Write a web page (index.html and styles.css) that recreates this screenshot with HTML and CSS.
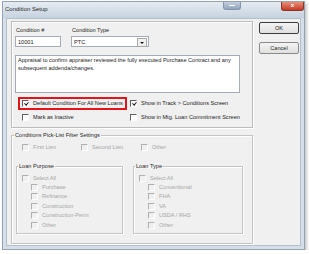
FILE: index.html
```html
<!DOCTYPE html>
<html lang="en">
<head>
  <meta charset="UTF-8">
  <meta name="viewport" content="width=device-width, initial-scale=1.0">
  <title>Condition Setup</title>
  <link rel="stylesheet" href="styles.css">
</head>
<body>
  <div class="window">
    <div class="titlebar">
      <span class="title">Condition Setup</span>
      <span class="tb-min"></span>
      <span class="tb-close">x</span>
    </div>

    <div class="client">
      <div class="main">
        <div class="frame">
          <div class="fields">
            <div class="field">
              <label class="lbl">Condition #</label>
              <div class="input num">10001</div>
            </div>
            <div class="field">
              <label class="lbl">Condition Type</label>
              <div class="input select">PTC<span class="drop"></span></div>
            </div>
          </div>

          <div class="memo">Appraisal to confirm appraiser reviewed the fully executed Purchase Contract and any subsequent addenda/changes.</div>

          <div class="opts">
            <div class="opt highlight"><span class="cb on"></span>Default Condition For All New Loans</div>
            <div class="opt"><span class="cb on"></span>Show in Track &gt; Conditions Screen</div>
            <div class="opt indent"><span class="cb"></span>Mark as Inactive</div>
            <div class="opt"><span class="cb"></span>Show in Mtg. Loan Commitment Screen</div>
          </div>
        </div>

        <fieldset class="group">
          <legend>Conditions Pick-List Filter Settings</legend>
          <div class="liens">
            <div class="opt off"><span class="cb"></span>First Lien</div>
            <div class="opt off"><span class="cb"></span>Second Lien</div>
            <div class="opt off"><span class="cb"></span>Other</div>
          </div>

          <div class="subgroups">
            <fieldset class="sub purpose">
              <legend>Loan Purpose</legend>
              <div class="list">
                <div class="opt off"><span class="cb"></span>Select All</div>
                <div class="opt off child"><span class="cb"></span>Purchase</div>
                <div class="opt off child"><span class="cb"></span>Refinance</div>
                <div class="opt off child"><span class="cb"></span>Construction</div>
                <div class="opt off child"><span class="cb"></span>Construction-Perm</div>
                <div class="opt off child"><span class="cb"></span>Other</div>
              </div>
            </fieldset>
            <fieldset class="sub type">
              <legend>Loan Type</legend>
              <div class="list">
                <div class="opt off"><span class="cb"></span>Select All</div>
                <div class="opt off child"><span class="cb"></span>Conventional</div>
                <div class="opt off child"><span class="cb"></span>FHA</div>
                <div class="opt off child"><span class="cb"></span>VA</div>
                <div class="opt off child"><span class="cb"></span>USDA / RHS</div>
                <div class="opt off child"><span class="cb"></span>Other</div>
              </div>
            </fieldset>
          </div>
        </fieldset>
      </div>

      <div class="side">
        <button class="btn default">OK</button>
        <button class="btn">Cancel</button>
      </div>
    </div>
  </div>
</body>
</html>
```

FILE: styles.css
```css
html, body {
  margin: 0;
  padding: 0;
  background: #ffffff;
}
body {
  font-family: "Liberation Sans", Arial, sans-serif;
  font-size: 5.6px;
  line-height: 7px;
  color: #1c1c1c;
}

/* window chrome */
.window {
  margin: 1px 0 0 2px;
  width: 303px;
  height: 249px;
  box-sizing: border-box;
  border: 1px solid #95a2b1;
  background: #d6dfe9;
  box-shadow: 2px 2px 3px rgba(0, 0, 0, 0.22);
  display: flex;
  flex-direction: column;
}
.titlebar {
  height: 16px;
  display: flex;
  align-items: flex-start;
  background: linear-gradient(#e6ecf2, #c6d2df);
}
.title {
  padding: 4px 0 0 2px;
  font-size: 6px;
  color: #1f1f1f;
}
.tb-min {
  margin: 0 0 0 auto;
  width: 16px;
  height: 7px;
  border: 1px solid #8595a8;
  border-top: none;
  border-radius: 0 0 3px 3px;
  background: linear-gradient(#c3cfdd, #93a7c0);
  position: relative;
}
.tb-min::after {
  content: "";
  position: absolute;
  left: 5px;
  top: 3px;
  width: 6px;
  height: 1px;
  background: #ffffff;
}
.tb-close {
  margin: 0 0 0 40px;
  width: 21px;
  height: 8px;
  border: 1px solid #86362a;
  border-top: none;
  border-radius: 0 0 3px 3px;
  background: linear-gradient(#e8907f, #c53b25);
  color: #ffffff;
  font-size: 6px;
  line-height: 7px;
  text-align: center;
  font-weight: bold;
}
.client {
  flex: 1;
  margin: 0 3px 3px 3px;
  background: #f0f0f0;
  border: 1px solid #b4bfcc;
  display: flex;
  padding: 2px 0 0 4px;
}

/* main area */
.main {
  width: 242px;
  display: flex;
  flex-direction: column;
}
.frame {
  height: 107px;
  box-sizing: border-box;
  border: 1px solid #bcbcbc;
  box-shadow: inset 1px 1px 0 #ffffff, 1px 1px 0 #ffffff;
  padding: 5px 0 0 3px;
}
.fields {
  display: flex;
  gap: 10px;
}
.field {
  display: flex;
  flex-direction: column;
  gap: 2px;
}
.lbl {
  padding-left: 1px;
}
.input {
  height: 11px;
  box-sizing: border-box;
  border: 1px solid #a5acb5;
  background: #ffffff;
  padding: 1px 2px;
  line-height: 8px;
}
.num {
  width: 46px;
}
.select {
  width: 78px;
  display: flex;
  justify-content: space-between;
  padding-right: 1px;
}
.drop {
  width: 8px;
  height: 7px;
  border: 1px solid #a8a8a8;
  background: #f0f0f0;
  position: relative;
}
.drop::after {
  content: "";
  position: absolute;
  left: 2px;
  top: 3px;
  border-left: 2px solid transparent;
  border-right: 2px solid transparent;
  border-top: 2px solid #111111;
}
.memo {
  margin-top: 8px;
  width: 225px;
  height: 38px;
  box-sizing: border-box;
  border: 1px solid #a5acb5;
  background: #ffffff;
  padding: 1px 2px;
  line-height: 7.5px;
}
.opts {
  margin: 4px 0 0 3px;
  display: grid;
  grid-template-columns: 112px auto;
  row-gap: 1px;
  align-items: center;
}
.opts .opt {
  height: 13px;
}
.opt {
  display: flex;
  align-items: center;
  gap: 4px;
  white-space: nowrap;
}
.highlight {
  justify-self: start;
  border: 2px solid #e3141b;
  padding: 0 2px;
  height: 13px;
  box-sizing: border-box;
}
.indent {
  padding-left: 4px;
}

/* checkboxes */
.cb {
  flex: none;
  width: 7px;
  height: 7px;
  box-sizing: border-box;
  border-top: 1px solid #5e5e5e;
  border-left: 1px solid #5e5e5e;
  border-right: 1px solid #ffffff;
  border-bottom: 1px solid #ffffff;
  background: #ffffff;
  position: relative;
}
.cb.on::after {
  content: "";
  position: absolute;
  left: 1.5px;
  top: 0;
  width: 1.5px;
  height: 3px;
  border-right: 1.2px solid #1a1a1a;
  border-bottom: 1.2px solid #1a1a1a;
  transform: rotate(40deg);
}
.off {
  color: #a6a6a6;
}
.off .cb {
  border-top-color: #b0b0b0;
  border-left-color: #b0b0b0;
  background: #f0f0f0;
}

/* group boxes */
fieldset {
  margin: 0;
  padding: 0;
  min-width: 0;
  border: 1px solid #c4c4c4;
  box-shadow: inset 1px 1px 0 #ffffff, 1px 1px 0 #ffffff;
}
legend {
  padding: 0 1px;
  line-height: 7px;
}
.group {
  margin-top: 3.5px;
  height: 112px;
  box-sizing: border-box;
}
.group > legend {
  margin-left: 2px;
}
.liens {
  padding: 4px 0 0 10px;
  display: grid;
  grid-template-columns: 59px 60px auto;
  height: 9px;
  align-items: center;
}
.subgroups {
  margin-top: 11px;
  padding-left: 4px;
  display: flex;
  gap: 10px;
}
.sub {
  height: 71.5px;
  box-sizing: border-box;
}
.sub > legend {
  margin-left: 1px;
}
.purpose {
  width: 107px;
}
.type {
  width: 110px;
}
.list {
  padding: 4px 0 0 5px;
}
.list .opt {
  height: 9.4px;
}
.child {
  padding-left: 9px;
}

/* buttons */
.side {
  margin-left: 6px;
  padding-top: 1px;
  display: flex;
  flex-direction: column;
  gap: 8px;
}
.btn {
  width: 40px;
  height: 12px;
  padding: 0;
  font-family: inherit;
  font-size: 5.6px;
  color: #1c1c1c;
  border: 1px solid #8a8a8a;
  border-radius: 2px;
  background: linear-gradient(#f4f4f4, #e0e0e0);
}
.btn.default {
  border-color: #3c3c3c;
}
```
